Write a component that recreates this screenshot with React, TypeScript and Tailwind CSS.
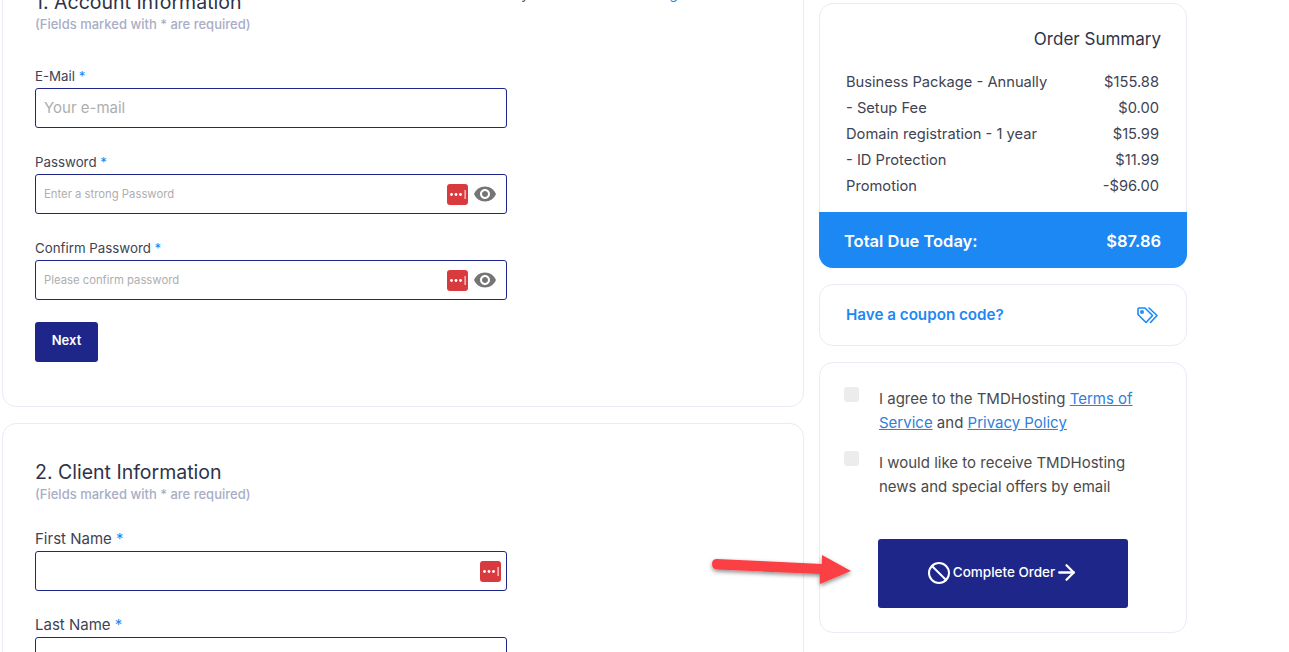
import { ArrowRight, Ban } from "lucide-react";

const Req = () => <span className="text-[#1c88f4]">*</span>;

function PassIcon() {
  return (
    <svg viewBox="0 0 21 21" className="w-[21px] h-[21px] shrink-0">
      <rect width="21" height="21" rx="3" fill="#d93a3e" />
      <circle cx="4.5" cy="10.5" r="1.4" fill="#fff" />
      <circle cx="9" cy="10.5" r="1.4" fill="#fff" />
      <circle cx="13.5" cy="10.5" r="1.4" fill="#fff" />
      <rect x="17.6" y="6" width="1" height="9" fill="#fff" />
    </svg>
  );
}

function EyeIcon() {
  return (
    <svg viewBox="0 0 24 24" className="w-6 h-6 shrink-0" fill="#757575">
      <path d="M12 4.5C7 4.5 2.73 7.61 1 12c1.73 4.39 6 7.5 11 7.5s9.27-3.11 11-7.5c-1.73-4.39-6-7.5-11-7.5zM12 17c-2.76 0-5-2.24-5-5s2.24-5 5-5 5 2.24 5 5-2.24 5-5 5zm0-8c-1.66 0-3 1.34-3 3s1.34 3 3 3 3-1.34 3-3-1.34-3-3-3z" />
    </svg>
  );
}

function TagsIcon() {
  return (
    <svg viewBox="0 0 22 17" className="w-[22px] h-[17px]" fill="none" stroke="#1c88f4" strokeWidth="1.6" strokeLinejoin="round">
      <path d="M1 2a1 1 0 0 1 1-1h6l7.5 7.5L9 15.5 1 7.5Z" />
      <circle cx="5" cy="5" r="1.2" />
      <path d="M12 1l8 7.5-6.500 7" strokeLinecap="round" />
    </svg>
  );
}

function Field({
  label,
  placeholder,
  small,
  pass,
  eye,
  large,
  className,
}: {
  label: string;
  placeholder?: string;
  small?: boolean;
  pass?: boolean;
  eye?: boolean;
  large?: boolean;
  className?: string;
}) {
  return (
    <div className={className}>
      <label
        className={`block h-[20px] mb-[2px] leading-[20px] text-[#3f4354] ${
          large ? "text-[15px]" : "text-[13.3px]"
        }`}
      >
        {label} <Req />
      </label>
      <div className="flex items-center w-[472px] h-[40px] border border-[#1e2789] rounded-[3px] bg-white pl-2 pr-[5px]">
        <input
          placeholder={placeholder}
          className={`flex-1 min-w-0 outline-none bg-transparent placeholder:text-[#aeaeae] ${
            small ? "text-[11.3px]" : "text-[15px]"
          }`}
        />
        {pass && <PassIcon />}
        {eye && (
          <span className="ml-[5px] mr-[4px]">
            <EyeIcon />
          </span>
        )}
      </div>
    </div>
  );
}

function Note() {
  return (
    <p className="text-[13px] leading-[16px] font-medium text-[#a9adc6]">
      (Fields marked with * are required)
    </p>
  );
}

function SummaryRow({ name, price }: { name: string; price: string }) {
  return (
    <div className="flex justify-between h-[26px] items-center">
      <span>{name}</span>
      <span>{price}</span>
    </div>
  );
}

export default function App() {
  return (
    <div
      className="relative h-screen overflow-hidden bg-white text-[#3f4354]"
      style={{ fontFamily: "Inter, sans-serif" }}
    >
      <div className="flex items-start gap-[15px] ml-[2px] -mt-[47px]">
        {/* Left forms */}
        <div className="w-[802px] shrink-0 flex flex-col gap-[16px]">
          <section className="h-[454px] border border-[#e9ebf6] rounded-[14px] px-[32px] pt-[34px]">
            <div className="flex items-center h-[28px]">
              <h2 className="w-[443px] text-[19.500px] leading-[28px] text-[#2f3349]">1. Account Information</h2>
              <span className="text-[14px] text-[#555] mb-[18px]">
                Already have an account? <a className="text-[#1c88f4]">Login</a>
              </span>
            </div>
            <Note />
            <Field className="mt-[34px]" label="E-Mail" placeholder="Your e-mail" />
            <Field className="mt-[24px]" label="Password" placeholder="Enter a strong Password" small pass eye />
            <Field className="mt-[24px]" label="Confirm Password" placeholder="Please confirm password" small pass eye />
            <button className="block mt-[22px] w-[63px] h-[40px] rounded-[3px] bg-[#1e2789] text-white text-[13px] font-semibold pb-[3px]">
              Next
            </button>
          </section>
          <section className="h-[300px] border border-[#e9ebf6] rounded-[14px] px-[32px] pt-[34px]">
            <h2 className="h-[28px] text-[19.500px] leading-[28px] text-[#2f3349]">2. Client Information</h2>
            <Note />
            <Field className="mt-[27px]" label="First Name" pass large />
            <Field className="mt-[24px]" label="Last Name" large />
          </section>
        </div>

        {/* Right summary */}
        <aside className="w-[368px] shrink-0 mt-[50px] flex flex-col gap-[16px]">
          <div className="border border-[#e9ebf6] rounded-[14px] h-[265px] flex flex-col">
            <div className="flex-1 pl-[26px] pr-[27px] pt-[23px] text-[14.700px]">
              <h3 className="text-right text-[17px] leading-[24px] text-[#2f3349] -mr-[2px] mb-[18px]">Order Summary</h3>
              <SummaryRow name="Business Package - Annually" price="$155.88" />
              <SummaryRow name="- Setup Fee" price="$0.00" />
              <SummaryRow name="Domain registration - 1 year" price="$15.99" />
              <SummaryRow name="- ID Protection" price="$11.99" />
              <SummaryRow name="Promotion" price="-$96.00" />
            </div>
            <div className="-m-px h-[56px] flex items-center justify-between pl-[25px] pr-[26px] pt-[2px] bg-[#1c88f4] rounded-b-[14px] text-white text-[16.500px] font-semibold">
              <span>Total Due Today:</span>
              <span>$87.86</span>
            </div>
          </div>

          <div className="border border-[#e9ebf6] rounded-[14px] h-[62px] flex items-center justify-between pl-[26px] pr-[27px]">
            <a className="text-[#1c88f4] text-[15.200px] font-semibold">Have a coupon code?</a>
            <TagsIcon />
          </div>

          <div className="border border-[#e9ebf6] rounded-[14px] h-[271px] pl-[24px] pt-[24px]">
            <div className="flex gap-[20px]">
              <span className="w-[15px] h-[15px] shrink-0 rounded-[3px] bg-[#ececec]" />
              <p className="w-[270px] text-[15px] leading-[24px] text-[#4a4a4a]">
                I agree to the TMDHosting <a className="text-[#2f80d9] underline">Terms of Service</a> and{" "}
                <a className="text-[#2f80d9] underline">Privacy Policy</a>
              </p>
            </div>
            <div className="flex gap-[20px] mt-[16px]">
              <span className="w-[15px] h-[15px] shrink-0 rounded-[3px] bg-[#ececec]" />
              <p className="w-[270px] text-[15px] leading-[24px] text-[#4a4a4a]">
                I would like to receive TMDHosting news and special offers by email
              </p>
            </div>
            <button className="mt-[40px] ml-[34px] w-[250px] h-[69px] pb-[2px] rounded-[3px] bg-[#1e2789] text-white text-[13.500px] font-medium flex items-center justify-center">
              <Ban className="w-6 h-6 mr-[2px]" strokeWidth={2} />
              Complete Order
              <ArrowRight className="w-[25px] h-[25px] -ml-[1px]" strokeWidth={2.2} />
            </button>
          </div>
        </aside>
      </div>

      {/* Annotation arrow drawn over the page */}
      <svg className="absolute left-[705px] top-[545px] w-[155px] h-[50px]" viewBox="0 0 155 50">
        <defs>
          <filter id="arrow-shadow" x="-10%" y="-30%" width="120%" height="170%">
            <feDropShadow dx="0" dy="2" stdDeviation="2" floodColor="#000" floodOpacity="0.45" />
          </filter>
        </defs>
        <path
          d="M12 14 L117 19 L117 10 L146 26 L115 39 L115 29 L12 24.500 Q7 24 7 19 Q7 14 12 14 Z"
          fill="#fb4144"
          filter="url(#arrow-shadow)"
        />
      </svg>
    </div>
  );
}
